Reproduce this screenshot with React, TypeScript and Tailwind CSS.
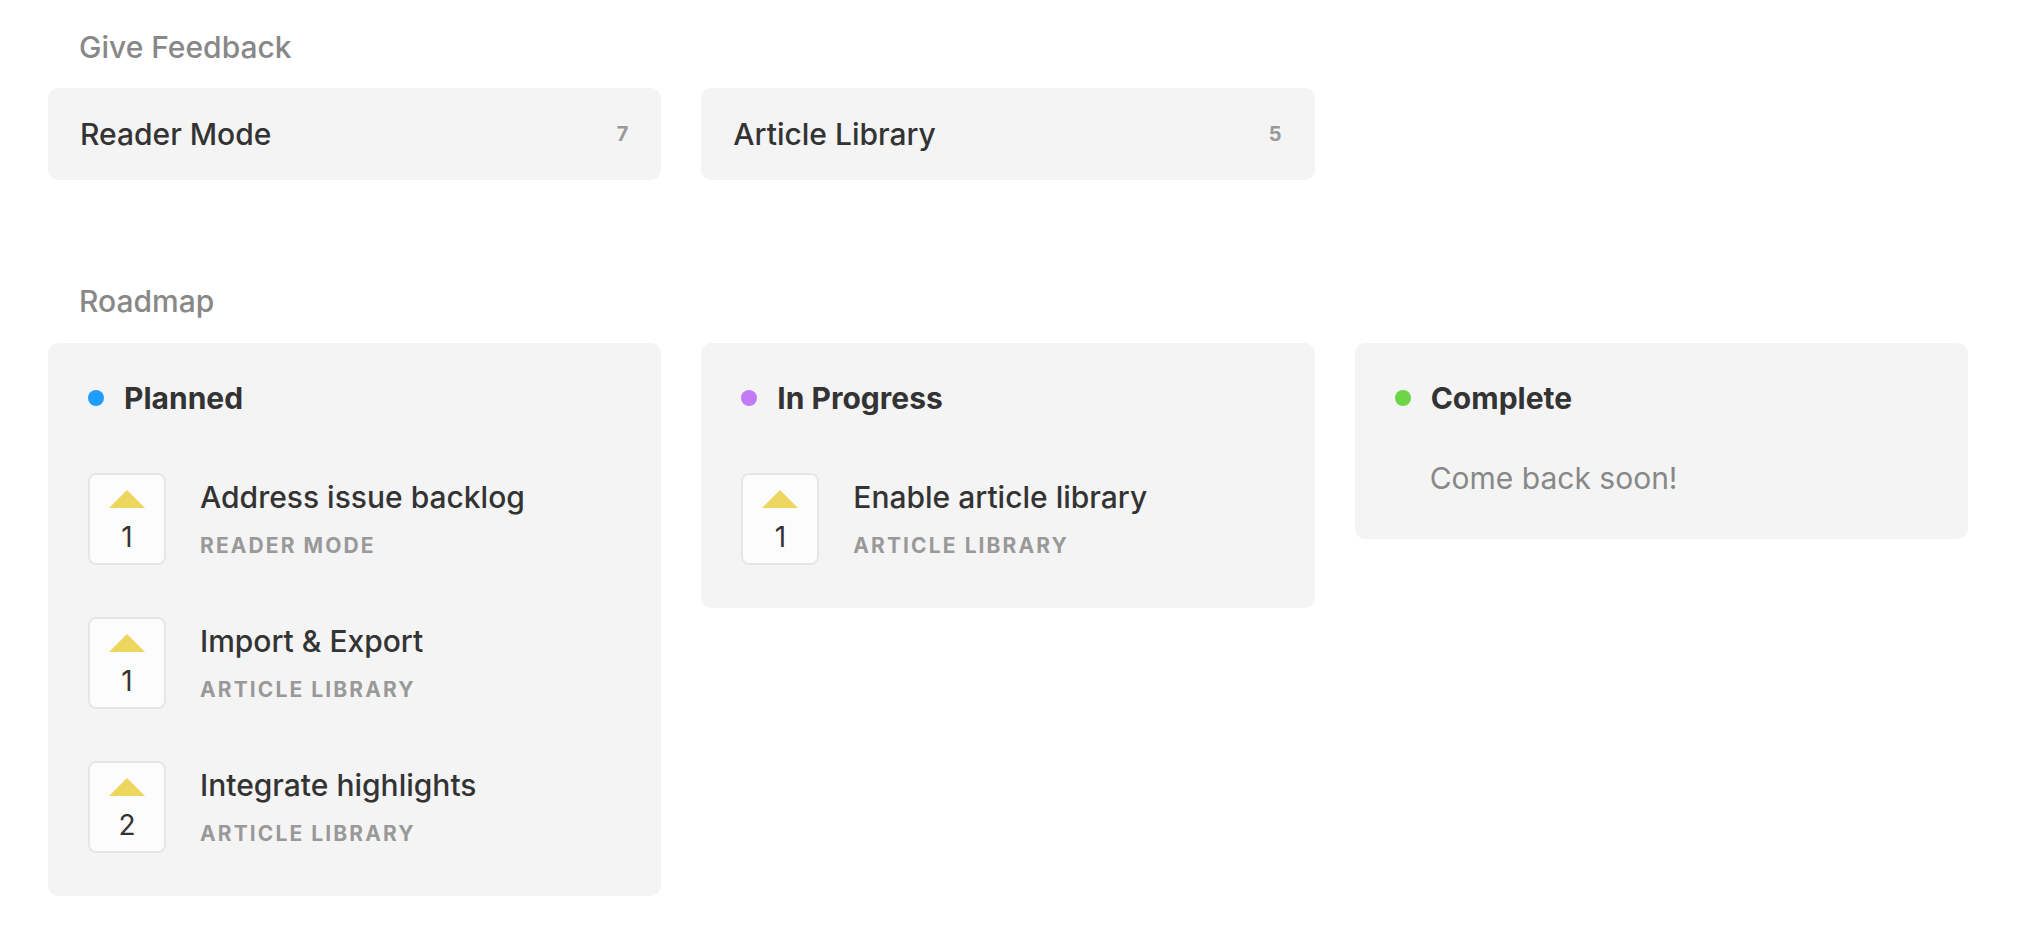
import React from "react";

type Item = { votes: number; title: string; board: string };
type Column = { name: string; dot: string; items: Item[]; empty?: string };

const boards = [
  { name: "Reader Mode", count: 7 },
  { name: "Article Library", count: 5 },
];

const columns: Column[] = [
  {
    name: "Planned",
    dot: "bg-[#1f9cfd]",
    items: [
      { votes: 1, title: "Address issue backlog", board: "Reader Mode" },
      { votes: 1, title: "Import & Export", board: "Article Library" },
      { votes: 2, title: "Integrate highlights", board: "Article Library" },
    ],
  },
  {
    name: "In Progress",
    dot: "bg-[#c17bf6]",
    items: [{ votes: 1, title: "Enable article library", board: "Article Library" }],
  },
  { name: "Complete", dot: "bg-[#6bd546]", items: [], empty: "Come back soon!" },
];

function VoteBox({ votes }: { votes: number }) {
  return (
    <div className="w-[78px] h-[92px] shrink-0 rounded-[8px] border-2 border-[#e6e6e6] bg-[#fcfcfc] flex flex-col items-center pt-[15px]">
      <div className="w-0 h-0 border-l-[18px] border-r-[18px] border-b-[18px] border-l-transparent border-r-transparent border-b-[#ecd65f]" />
      <div className="mt-[11px] text-[28px] leading-[36px] text-[#333]">{votes}</div>
    </div>
  );
}

function SectionTitle({ children }: { children: React.ReactNode }) {
  return (
    <h2 className="pl-[31px] text-[30px] leading-[36px] font-medium text-[#888]">{children}</h2>
  );
}

export default function App() {
  return (
    <div className="min-h-screen bg-white font-['Inter',sans-serif] text-[#333] pl-[48px] pr-[54px] pt-[29px]">
      <SectionTitle>Give Feedback</SectionTitle>
      <div className="grid grid-cols-3 gap-[40px] mt-[23px]">
        {boards.map((b) => (
          <div
            key={b.name}
            className="h-[92px] rounded-[10px] bg-[#f4f4f4] flex items-center justify-between pl-[32px] pr-[33px]"
          >
            <span className="text-[30px] font-medium">{b.name}</span>
            <span className="text-[20px] font-bold text-[#999]">{b.count}</span>
          </div>
        ))}
      </div>

      <div className="mt-[103px]">
        <SectionTitle>Roadmap</SectionTitle>
      </div>
      <div className="grid grid-cols-3 gap-[40px] mt-[24px] items-start">
        {columns.map((c) => (
          <div key={c.name} className="rounded-[10px] bg-[#f4f4f4] px-[40px] pt-[37px] pb-[43px]">
            <div className="flex items-center gap-[20px]">
              <span className={`w-[16px] h-[16px] rounded-full ${c.dot}`} />
              <span className="text-[30px] leading-[36px] font-bold">{c.name}</span>
            </div>
            {c.items.length > 0 ? (
              <div className="mt-[57px] flex flex-col gap-[52px]">
                {c.items.map((it) => (
                  <div key={it.title} className="flex items-center gap-[34px]">
                    <VoteBox votes={it.votes} />
                    <div className="flex flex-col gap-[17px]">
                      <span className="text-[30px] leading-[36px] font-medium">{it.title}</span>
                      <span className="text-[21px] leading-[28px] font-bold tracking-[0.1em] uppercase text-[#999]">
                        {it.board}
                      </span>
                    </div>
                  </div>
                ))}
              </div>
            ) : (
              <p className="mt-[44px] pl-[35px] text-[30px] leading-[36px] text-[#888]">{c.empty}</p>
            )}
          </div>
        ))}
      </div>
    </div>
  );
}
